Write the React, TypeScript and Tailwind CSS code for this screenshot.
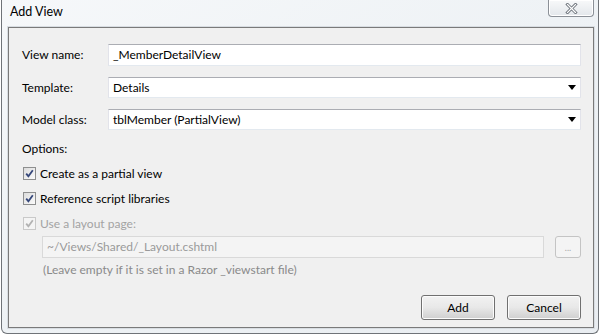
import React from "react";

const font = { fontFamily: 'Lato, "Open Sans", "Liberation Sans", sans-serif' };

function CloseGlyph() {
  return (
    <svg width="13" height="11" viewBox="0 0 13 11">
      <path d="M2.5 1.5 L10.5 9.5 M10.5 1.5 L2.5 9.5" stroke="#6e747c" strokeWidth="3" strokeLinecap="square" />
      <path d="M2.5 1.5 L10.5 9.5 M10.5 1.5 L2.5 9.5" stroke="#ffffff" strokeWidth="1.2" strokeLinecap="square" />
    </svg>
  );
}

function Check({ disabled }: { disabled?: boolean }) {
  return (
    <span
      className={
        "flex h-[13px] w-[13px] shrink-0 items-center justify-center border " +
        (disabled ? "border-[#c9c9c9] bg-[#f4f4f4]" : "border-[#8e8f8f] bg-gradient-to-br from-[#dcdcdc] to-[#fbfbfb]")
      }
    >
      <svg width="9" height="9" viewBox="0 0 9 9">
        <path
          d="M1.2 4.6 L3.4 7.2 L7.8 1.3"
          fill="none"
          stroke={disabled ? "#b2b2b2" : "#35477a"}
          strokeWidth="1.8"
        />
      </svg>
    </span>
  );
}

function Field({ value, combo }: { value: string; combo?: boolean }) {
  return (
    <div className="flex h-full flex-1 items-center border border-t-[#abadb3] border-x-[#e2e3ea] border-b-[#e3e9ef] bg-white pl-[4px] pr-[4px]">
      <span className="flex-1 text-black">{value}</span>
      {combo && (
        <svg width="8" height="5" viewBox="0 0 8 5">
          <path d="M0 0 H8 L4 5 Z" fill="#000" />
        </svg>
      )}
    </div>
  );
}

function Row({ label, children, h }: { label: string; children: React.ReactNode; h: string }) {
  return (
    <div className={"flex items-center " + h}>
      <span className="w-[86px] shrink-0 text-black">{label}</span>
      {children}
    </div>
  );
}

function Btn({ text }: { text: string }) {
  return (
    <button className="relative h-[25px] w-[74px] overflow-hidden rounded-[3px] border border-[#707070] bg-gradient-to-b from-[#f2f2f2] via-[#e8e8e8] to-[#cfcfcf] text-black shadow-[inset_0_0_0_1px_#fcfcfc]">
      {text}
    </button>
  );
}

export default function App() {
  return (
    <div className="h-[336px] w-[602px] bg-white text-[12px] leading-[16px]" style={font}>
      <div className="ml-[1px] flex h-[334px] w-[598px] flex-col rounded-b-[6px] border border-t-0 border-[#6f7378] bg-gradient-to-br from-[#f6f8fa] via-[#eef2f5] to-[#e9edf1] pb-[5px] pl-[6px] pr-[4px]">
        <div className="flex h-[27px] shrink-0 items-start justify-between">
          <span className="mt-[4px] pl-[2px] text-[12.5px] text-black">Add View</span>
          <div className="flex h-[17px] w-[46px] items-center justify-center rounded-b-[4px] border border-t-0 border-[#8b9097] bg-gradient-to-b from-[#f8f9fa] to-[#e3e7eb] shadow-[inset_0_0_0_1px_#ffffff]">
            <CloseGlyph />
          </div>
        </div>
        <div className="flex flex-1 flex-col border border-[#7a7a7a] bg-[#f0f0f0] pb-[7px] pl-[13px] pr-[12px] pt-[16px] shadow-[0_0_0_1px_#d8dde2]">
          <div className="flex flex-col gap-[11px]">
            <Row label="View name:" h="h-[22px]">
              <Field value="_MemberDetailView" />
            </Row>
            <Row label="Template:" h="h-[21px]">
              <Field value="Details" combo />
            </Row>
            <Row label="Model class:" h="h-[21px]">
              <Field value="tblMember (PartialView)" combo />
            </Row>
          </div>
          <div className="mt-[6px] flex flex-col">
            <div className="flex h-[25px] items-center text-black">Options:</div>
            <label className="flex h-[25px] items-center gap-[4px] pl-[1px] text-black">
              <Check />
              Create as a partial view
            </label>
            <label className="flex h-[25px] items-center gap-[4px] pl-[1px] text-black">
              <Check />
              Reference script libraries
            </label>
            <label className="flex h-[25px] items-center gap-[4px] pl-[1px] text-[#a3a3a3]">
              <Check disabled />
              Use a layout page:
            </label>
          </div>
          <div className="ml-[20px] flex h-[22px] items-stretch gap-[11px]">
            <div className="flex flex-1 items-center border border-[#d9d9d9] bg-[#f4f4f4] pl-[4px] text-[#9a9a9a]">
              ~/Views/Shared/_Layout.cshtml
            </div>
            <div className="flex w-[26px] items-center justify-center rounded-[3px] border border-[#c4c4c4] bg-[#f4f4f4] text-[9px] leading-none text-[#a8a8a8]">
              ...
            </div>
          </div>
          <div className="ml-[21px] mt-[4px] text-[#8a8a8a]">(Leave empty if it is set in a Razor _viewstart file)</div>
          <div className="mt-auto flex justify-end gap-[12px]">
            <Btn text="Add" />
            <Btn text="Cancel" />
          </div>
        </div>
      </div>
    </div>
  );
}
